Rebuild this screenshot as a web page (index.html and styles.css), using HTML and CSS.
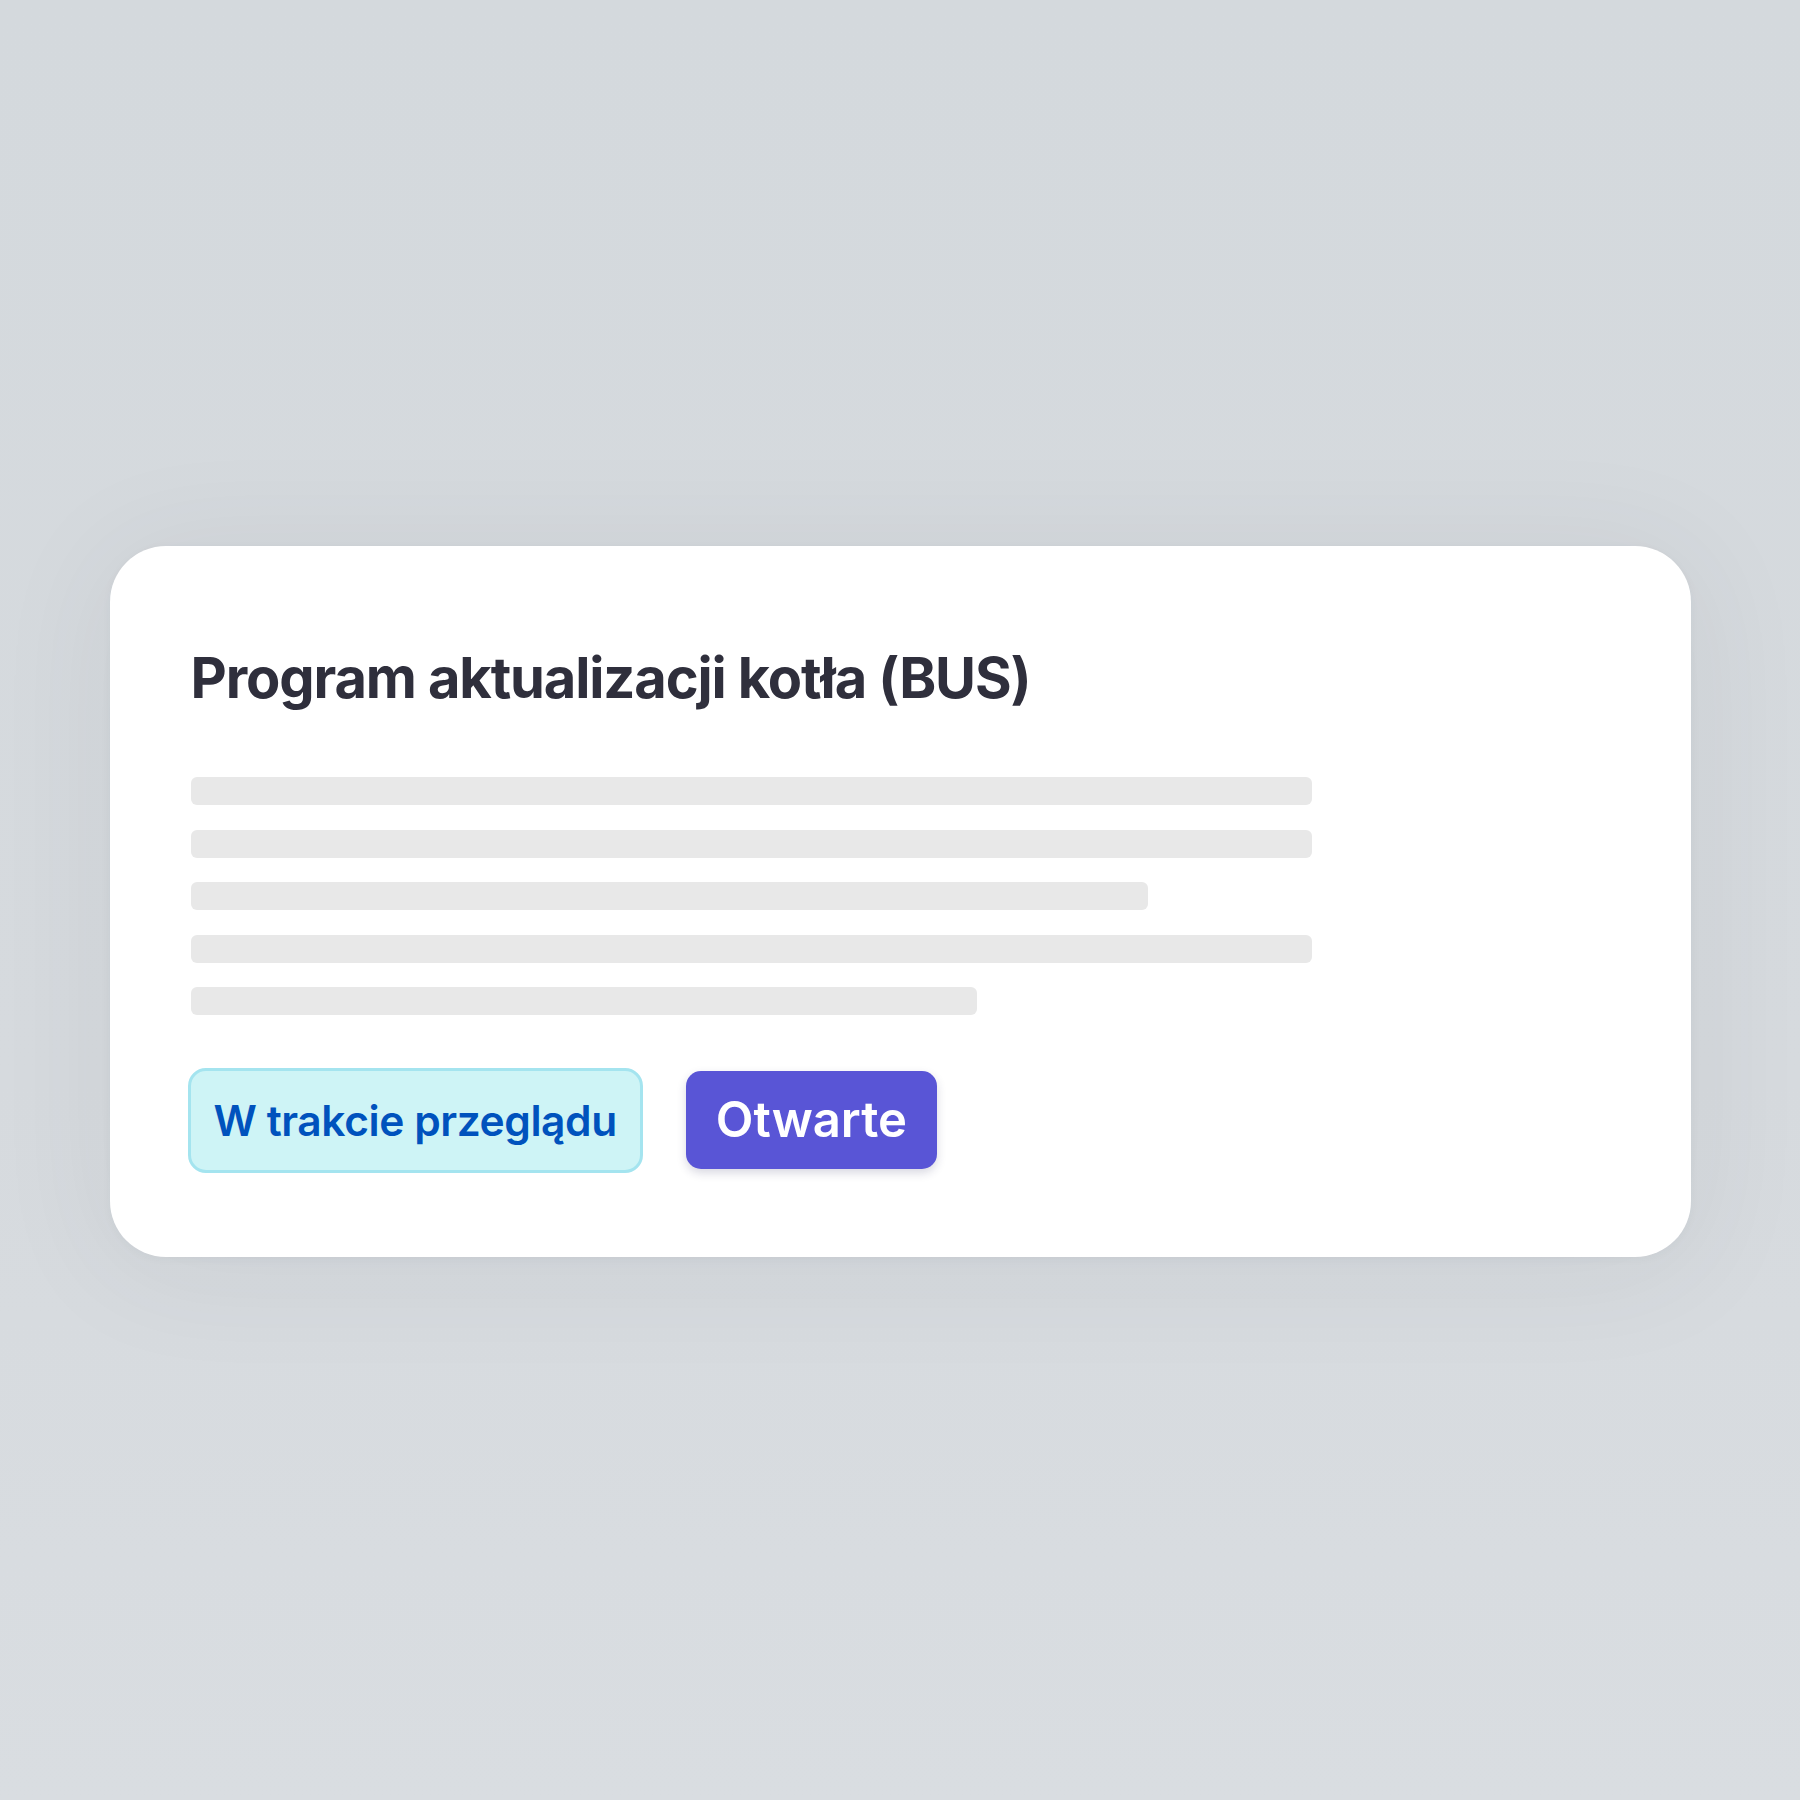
FILE: index.html
```html
<!DOCTYPE html>
<html lang="pl">
<head>
    <meta charset="UTF-8">
    <meta name="viewport" content="width=device-width, initial-scale=1.0">
    <title>Program aktualizacji kotła</title>
    <link rel="stylesheet" href="styles.css">
</head>
<body>
    <div class="card">
        <h1 class="card-title">Program aktualizacji kotła (BUS)</h1>
        <!-- placeholder lines for the description -->
        <div class="skeleton">
            <div class="skeleton-line"></div>
            <div class="skeleton-line"></div>
            <div class="skeleton-line short"></div>
            <div class="skeleton-line"></div>
            <div class="skeleton-line shorter"></div>
        </div>
        <div class="card-actions">
            <span class="status-badge">W trakcie przeglądu</span>
            <button class="open-button">Otwarte</button>
        </div>
    </div>
</body>
</html>
```

FILE: styles.css
```css
/* General Styles */
* {
    box-sizing: border-box;
    margin: 0;
    padding: 0;
}

body {
    font-family: 'Inter', 'Noto Sans', sans-serif;
    background: linear-gradient(180deg, #d4d9dd 0%, #d6dade 60%, #d9dde1 100%);
    min-height: 100vh;
    padding-top: 3px;
    display: flex;
    align-items: center;
    justify-content: center;
}

.card {
    width: 1581px;
    background-color: #ffffff;
    border-radius: 56px;
    padding: 98.5px 81px 84px;
    box-shadow: 0 10px 120px rgba(60, 70, 80, 0.08), 0 2px 10px rgba(60, 70, 80, 0.04);
}

.card-title {
    font-size: 56px;
    line-height: 1.2;
    font-weight: 700;
    color: #2f2f3c;
    letter-spacing: -0.02em;
}

.skeleton {
    margin-top: 65.5px;
    width: 1121px;
    display: flex;
    flex-direction: column;
    gap: 24.5px;
}

.skeleton-line {
    height: 28px;
    background-color: #e8e8e8;
    border-radius: 6px;
}

.skeleton-line.short {
    width: 85.4%;
}

.skeleton-line.shorter {
    width: 70.2%;
}

/* Status + button row */
.card-actions {
    margin-top: 52.5px;
    margin-left: -3px;
    display: flex;
    align-items: center;
    gap: 43px;
}

.status-badge {
    display: inline-block;
    background-color: #cef4f6;
    border: 3px solid #a4e4ef;
    border-radius: 18px;
    color: #0052bd;
    font-size: 42.5px;
    font-weight: 600;
    letter-spacing: -0.01em;
    line-height: 1.2;
    padding: 24px 23px;
}

.open-button {
    font-family: inherit;
    background-color: #5955d6;
    color: #ffffff;
    border: none;
    border-radius: 15px;
    font-size: 49px;
    font-weight: 600;
    line-height: 1.2;
    padding: 19.5px 30px;
    box-shadow: 0 4px 10px rgba(40, 40, 90, 0.18);
    cursor: pointer;
}
```
